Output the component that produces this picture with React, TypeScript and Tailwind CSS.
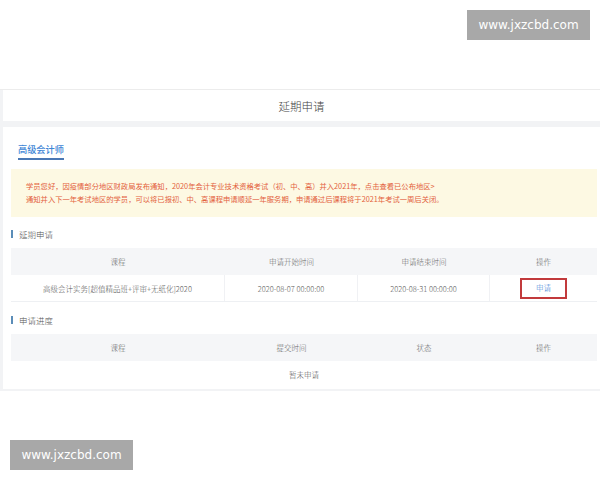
const cjk = { fontFamily: '"Noto Sans CJK SC", "Noto Sans", sans-serif' }

const columns = ['w-[214px]', 'w-[133px]', 'w-[132px]', 'flex-1']

function Watermark({ className }: { className: string }) {
  return (
    <div
      className={`absolute flex h-[30px] w-[123px] items-center justify-center bg-[#a8a8a8] text-[12px] text-white ${className}`}
      style={{ fontFamily: '"DejaVu Sans", sans-serif' }}
    >
      www.jxzcbd.com
    </div>
  )
}

function SectionTitle({ title, className }: { title: string; className: string }) {
  return (
    <div className={`flex h-[12px] items-center ${className}`}>
      <span className="h-[8px] w-[2px] bg-[#5b8db8]" />
      <span className="ml-[6px] text-[8.5px] font-light leading-[12px] text-[#555]">{title}</span>
    </div>
  )
}

function HeaderRow({ labels }: { labels: string[] }) {
  return (
    <div className="flex h-[27px] items-center bg-[#f5f6f8] text-[7.5px] font-light text-[#666]">
      {labels.map((label, i) => (
        <div key={label + i} className={`${columns[i]} text-center`}>
          {label}
        </div>
      ))}
    </div>
  )
}

export default function App() {
  return (
    <div className="relative h-[480px] w-[600px] overflow-hidden bg-white" style={cjk}>
      <div className="h-[89px]" />

      <div className="border-t border-[#ececec] bg-[#f2f3f5] pb-[2px] pl-[3px]">
        {/* page header */}
        <div className="flex h-[31px] items-center justify-center bg-white pt-[3px] text-[11.5px] font-light text-[#444]">
          延期申请
        </div>

        <div className="mt-[6px] bg-white pb-px pl-[8px] pr-[3px]">
          {/* tab */}
          <div className="flex pl-[7px] pt-[16px]">
            <div className="border-b-2 border-[#4a78b5] pb-[3px] text-[9.2px] font-medium leading-[12px] text-[#3e86d6]">
              高级会计师
            </div>
          </div>

          {/* notice */}
          <div className="mt-[9px] bg-[#fdf9e3] pb-[11px] pl-[15px] pt-[11px] text-[7.3px] leading-[13px] text-[#e3613d]">
            <p>
              学员您好，因疫情部分地区财政局发布通知，2020年会计专业技术资格考试（初、中、高）并入2021年，点击查看已公布地区&gt;
            </p>
            <p>
              通知并入下一年考试地区的学员，可以将已报初、中、高课程申请顺延一年服务期，申请通过后课程将于2021年考试一周后关闭。
            </p>
          </div>

          {/* deferral table */}
          <SectionTitle title="延期申请" className="mt-[11px]" />
          <div className="mt-[8px]">
            <HeaderRow labels={['课程', '申请开始时间', '申请结束时间', '操作']} />
            <div className="flex h-[27px] items-center border-b border-[#eef0f3] text-[7.5px] font-light text-[#555]">
              <div className={`${columns[0]} h-full border-r border-[#f0f1f4] text-center leading-[27px]`}>
                高级会计实务[超值精品班+评审+无纸化]2020
              </div>
              <div className={`${columns[1]} h-full border-r border-[#f0f1f4] text-center leading-[27px]`}>
                2020-08-07 00:00:00
              </div>
              <div className={`${columns[2]} h-full border-r border-[#f0f1f4] text-center leading-[27px]`}>
                2020-08-31 00:00:00
              </div>
              <div className={`${columns[3]} flex justify-center`}>
                <button className="flex h-[21px] w-[47px] items-center justify-center border-2 border-[#c23a3c] text-[7.5px] text-[#3b82d6]">
                  申请
                </button>
              </div>
            </div>
          </div>

          {/* progress table */}
          <SectionTitle title="申请进度" className="mt-[12px]" />
          <div className="mt-[8px]">
            <HeaderRow labels={['课程', '提交时间', '状态', '操作']} />
            <div className="flex h-[27px] items-center justify-center text-[7.5px] font-light text-[#555]">
              暂未申请
            </div>
          </div>
        </div>
      </div>

      <Watermark className="left-[467px] top-[10px]" />
      <Watermark className="left-[10px] top-[440px]" />
    </div>
  )
}
